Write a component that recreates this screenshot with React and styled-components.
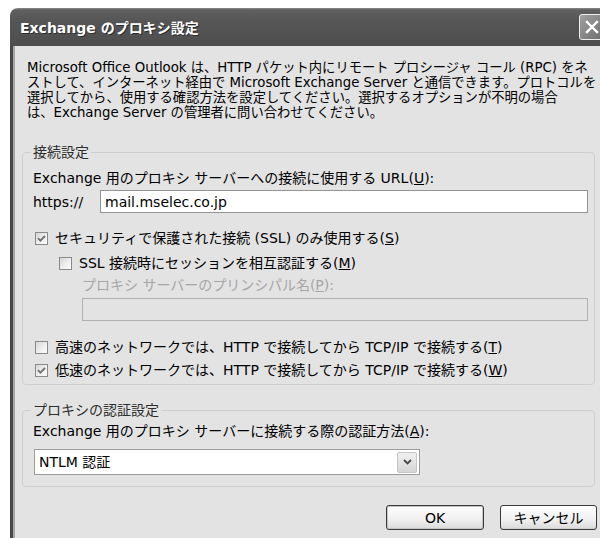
import React from "react";
import styled, { createGlobalStyle } from "styled-components";

const UI_FONT = `"DejaVu Sans", "Noto Sans CJK JP", sans-serif`;

const GlobalStyle = createGlobalStyle`
  html, body {
    margin: 0;
    padding: 0;
    background: #fff;
    overflow: hidden;
  }
  body {
    width: 600px;
    height: 538px;
  }
`;

const Window = styled.div`
  margin: 8px 0 0 10px;
  width: 600px;
`;

const TitleBar = styled.div`
  height: 38px;
  display: flex;
  align-items: center;
  justify-content: space-between;
  padding: 0 5px 0 10px;
  border-radius: 8px 8px 0 0;
  background: linear-gradient(
    to bottom,
    #8a8a8a 0,
    #606060 2px,
    #555 35%,
    #4e4e4e 100%
  );
`;

const Title = styled.span`
  font-family: "DejaVu Sans", "Noto Sans CJK JP", sans-serif;
  font-weight: bold;
  font-size: 14px;
  color: #fff;
  text-shadow: 1px 1px 0 #2c2c2c;
  white-space: nowrap;
`;

const CloseButton = styled.div`
  width: 26px;
  height: 26px;
  box-sizing: border-box;
  border: 1px solid #eeeeee;
  border-radius: 3px;
  background: linear-gradient(135deg, #a0a0a0, #6e6e6e);
  display: flex;
  align-items: center;
  justify-content: center;
`;

const Frame = styled.div`
  background: #e3e3e3;
  border-left: 3px solid #474747;
  box-shadow: inset 2px 0 0 #a6a6a6;
  padding: 14px 0 60px 0;
  font-family: ${UI_FONT};
  font-size: 14px;
  color: #000;
`;

const Description = styled.p`
  margin: 0 0 0 14px;
  font-size: 13.3px;
  line-height: 15px;
  white-space: nowrap;
`;

const Group = styled.fieldset`
  margin: ${(p) => p.$mt}px 15px 0 9px;
  padding: ${(p) => p.$pt}px 6px ${(p) => p.$pb}px 10px;
  border: 1px solid #cfcfcf;
  border-radius: 4px;
  min-width: 0;
`;

const Legend = styled.legend`
  padding: 0 2px;
  margin-left: -2px;
  line-height: 16px;
  color: #2e2e2e;
`;

const Label = styled.div`
  line-height: 16px;
  white-space: nowrap;
  margin: ${(p) => p.$mt || 0}px 0 0 ${(p) => p.$indent || 0}px;
  color: ${(p) => (p.$disabled ? "#a6a6a6" : "#000")};
`;

const FieldRow = styled.div`
  display: flex;
  align-items: center;
  margin-top: 4px;
`;

const Prefix = styled.span`
  width: 67px;
  line-height: 16px;
`;

const TextBox = styled.input`
  flex: 1;
  min-width: 0;
  height: 23px;
  box-sizing: border-box;
  margin: ${(p) => p.$mt || 0}px 0 0 ${(p) => p.$indent || 0}px;
  padding: 0 4px;
  border: 1px solid ${(p) => (p.disabled ? "#b0b0b0" : "#939393")};
  background: ${(p) => (p.disabled ? "#e3e3e3" : "#fff")};
  font-family: ${UI_FONT};
  font-size: 14px;
  color: #000;
  outline: none;
  display: block;
  width: ${(p) => (p.$block ? `calc(100% - ${p.$indent || 0}px)` : "auto")};
`;

const CheckRow = styled.div`
  display: flex;
  align-items: center;
  gap: 7px;
  height: 17px;
  line-height: 17px;
  white-space: nowrap;
  margin: ${(p) => p.$mt}px 0 0 ${(p) => p.$indent}px;
`;

const Box = styled.span`
  flex: none;
  width: 13px;
  height: 13px;
  box-sizing: border-box;
  border: 1px solid #8a8a8a;
  background: linear-gradient(135deg, #d6d6d6, #efefef 55%, #fdfdfd);
  display: flex;
  align-items: center;
  justify-content: center;
`;

const Select = styled.div`
  width: 386px;
  height: 26px;
  box-sizing: border-box;
  margin: 10px 0 0 1px;
  padding: 1px 2px 1px 0;
  border: 1px solid #9c9c9c;
  background: #fff;
  display: flex;
  align-items: center;
  justify-content: space-between;
`;

const SelectValue = styled.span`
  padding-left: 4px;
  line-height: 16px;
`;

const DropButton = styled.span`
  width: 20px;
  height: 21px;
  box-sizing: border-box;
  border: 1px solid #c6c6c6;
  border-radius: 2px;
  background: linear-gradient(to bottom, #f0f0f0, #d6d6d6);
  display: flex;
  align-items: center;
  justify-content: center;
`;

const ButtonBar = styled.div`
  display: flex;
  justify-content: flex-end;
  gap: 16px;
  margin: 18px 13px 0 0;
`;

const Button = styled.button`
  width: ${(p) => p.$w}px;
  height: 25px;
  padding: 0;
  border: 1px solid #3a3a3a;
  border-radius: 3px;
  background: linear-gradient(to bottom, #fefefe, #f0f0f0 60%, #dadada);
  box-shadow: ${(p) =>
    p.$default ? "inset 0 0 0 1px #c4c4c4" : "inset 0 -1px 0 #cfcfcf"};
  font-family: ${UI_FONT};
  font-size: 14px;
  color: #000;
  line-height: 16px;
`;

const Key = ({ k }) => (
  <>
    (<u>{k}</u>)
  </>
);

const CheckBox = ({ checked, label, mt, indent }) => (
  <CheckRow $mt={mt} $indent={indent}>
    <Box>
      {checked && (
        <svg width="11" height="11" viewBox="0 0 11 11">
          <path
            d="M2 5.2 L4.4 7.6 L9 3"
            fill="none"
            stroke="#727272"
            strokeWidth="1.9"
          />
        </svg>
      )}
    </Box>
    <span>{label}</span>
  </CheckRow>
);

export default function App() {
  return (
    <>
      <GlobalStyle />
      <Window>
        <TitleBar>
          <Title>Exchange のプロキシ設定</Title>
          <CloseButton>
            <svg width="14" height="14" viewBox="0 0 14 14">
              <path
                d="M2 2 L12 12 M12 2 L2 12"
                stroke="#fff"
                strokeWidth="2.4"
                strokeLinecap="square"
              />
            </svg>
          </CloseButton>
        </TitleBar>
        <Frame>
          <Description>
            Microsoft Office Outlook は、HTTP パケット内にリモート プロシージャ コール (RPC) をネ
            <br />
            ストして、インターネット経由で Microsoft Exchange Server と通信できます。プロトコルを
            <br />
            選択してから、使用する確認方法を設定してください。選択するオプションが不明の場合
            <br />
            は、Exchange Server の管理者に問い合わせてください。
          </Description>

          <Group $mt={24} $pt={10} $pb={5}>
            <Legend>接続設定</Legend>
            <Label>
              Exchange 用のプロキシ サーバーへの接続に使用する URL<Key k="U" />:
            </Label>
            <FieldRow>
              <Prefix>https://</Prefix>
              <TextBox readOnly defaultValue="mail.mselec.co.jp" />
            </FieldRow>
            <CheckBox
              checked
              mt={17}
              indent={2}
              label={
                <>
                  セキュリティで保護された接続 (SSL) のみ使用する<Key k="S" />
                </>
              }
            />
            <CheckBox
              mt={8}
              indent={26}
              label={
                <>
                  SSL 接続時にセッションを相互認証する<Key k="M" />
                </>
              }
            />
            <Label $disabled $mt={5} $indent={49}>
              プロキシ サーバーのプリンシパル名<Key k="P" />:
            </Label>
            <TextBox disabled $block $mt={5} $indent={49} />
            <CheckBox
              mt={18}
              indent={2}
              label={
                <>
                  高速のネットワークでは、HTTP で接続してから TCP/IP で接続する
                  <Key k="T" />
                </>
              }
            />
            <CheckBox
              checked
              mt={6}
              indent={2}
              label={
                <>
                  低速のネットワークでは、HTTP で接続してから TCP/IP で接続する
                  <Key k="W" />
                </>
              }
            />
          </Group>

          <Group $mt={17} $pt={5} $pb={11}>
            <Legend>プロキシの認証設定</Legend>
            <Label>
              Exchange 用のプロキシ サーバーに接続する際の認証方法<Key k="A" />:
            </Label>
            <Select>
              <SelectValue>NTLM 認証</SelectValue>
              <DropButton>
                <svg width="9" height="6" viewBox="0 0 9 6">
                  <path
                    d="M1 1 L4.5 4.5 L8 1"
                    fill="none"
                    stroke="#4a4a4a"
                    strokeWidth="1.8"
                  />
                </svg>
              </DropButton>
            </Select>
          </Group>

          <ButtonBar>
            <Button $w={98} $default>
              OK
            </Button>
            <Button $w={97}>キャンセル</Button>
          </ButtonBar>
        </Frame>
      </Window>
    </>
  );
}
